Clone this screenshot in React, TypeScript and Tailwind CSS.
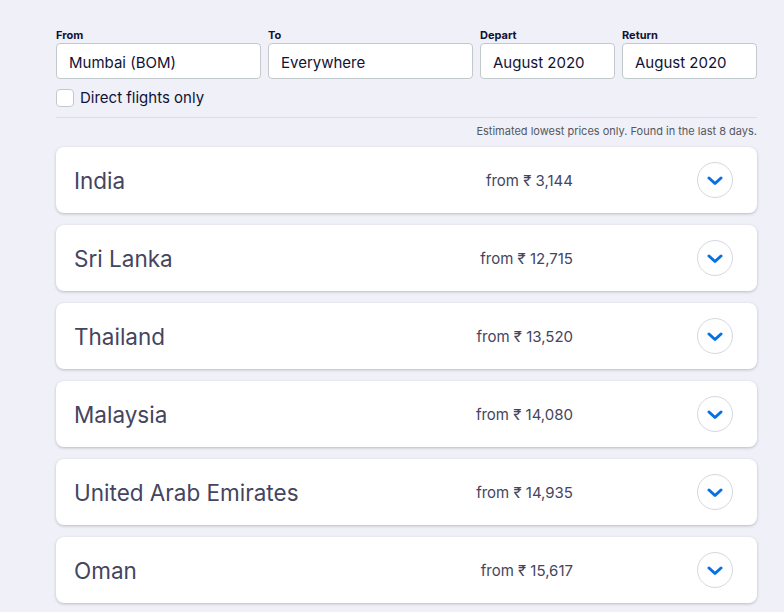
const RESULTS = [
  { id: "in", name: "India", price: "3,144" },
  { id: "lk", name: "Sri Lanka", price: "12,715" },
  { id: "th", name: "Thailand", price: "13,520" },
  { id: "my", name: "Malaysia", price: "14,080" },
  { id: "ae", name: "United Arab Emirates", price: "14,935" },
  { id: "om", name: "Oman", price: "15,617" },
]

const FIELDS = [
  { label: "From", value: "Mumbai (BOM)", width: "w-[205px]" },
  { label: "To", value: "Everywhere", width: "w-[205px]" },
  { label: "Depart", value: "August 2020", width: "w-[135px]" },
  { label: "Return", value: "August 2020", width: "w-[135px]" },
]

function Chevron() {
  return (
    <svg width="16" height="10" viewBox="0 0 16 10" className="mt-[2px]">
      <polyline
        points="2,2 8,7.5 14,2"
        fill="none"
        stroke="#0770e3"
        strokeWidth="3"
        strokeLinecap="round"
        strokeLinejoin="round"
      />
    </svg>
  )
}

export default function App() {
  return (
    <div className="min-h-screen bg-[#eff0f8] font-['Inter',sans-serif] text-[#111236]">
      <div className="w-[701px] ml-[56px] pt-[28px]">
        {/* Search form */}
        <div className="flex gap-[7px]">
          {FIELDS.map((f) => (
            <div key={f.label} className={f.width}>
              <div className="text-[11px] font-bold leading-[14px] mb-[1px]">{f.label}</div>
              <div className="h-[36px] bg-white border border-[#c2c9cd] rounded-[4px] flex items-center px-[12px] pt-[5px] text-[15px]">
                {f.value}
              </div>
            </div>
          ))}
        </div>

        <label className="flex items-center mt-[9px] h-[20px]">
          <span className="w-[18px] h-[18px] bg-white border border-[#c2c9cd] rounded-[4px] mr-[6px]" />
          <span className="text-[15px]">Direct flights only</span>
        </label>

        <div className="border-t border-[#dddde5] mt-[9px]" />

        <p className="text-right text-[11px] text-[#545860] mt-[6px] leading-[14px]">
          Estimated lowest prices only. Found in the last 8 days.
        </p>

        {/* Results */}
        <div className="mt-[9px] flex flex-col gap-[12px]">
          {RESULTS.map((r) => (
            <div
              key={r.id}
              className="h-[66px] bg-white rounded-[8px] shadow-[0_1px_3px_0_rgba(37,32,31,0.25)] flex items-center pl-[18px] pr-[24px]"
            >
              <span className="flex-1 text-[22.5px] text-[#444560] pt-[2px]">{r.name}</span>
              <span className="text-[15px] text-[#444560] mr-[124px] pt-[2px]">from ₹ {r.price}</span>
              <span className="w-[36px] h-[36px] rounded-full border-[1.5px] border-[#d6d7e0] flex items-center justify-center">
                <Chevron />
              </span>
            </div>
          ))}
        </div>
      </div>
    </div>
  )
}
